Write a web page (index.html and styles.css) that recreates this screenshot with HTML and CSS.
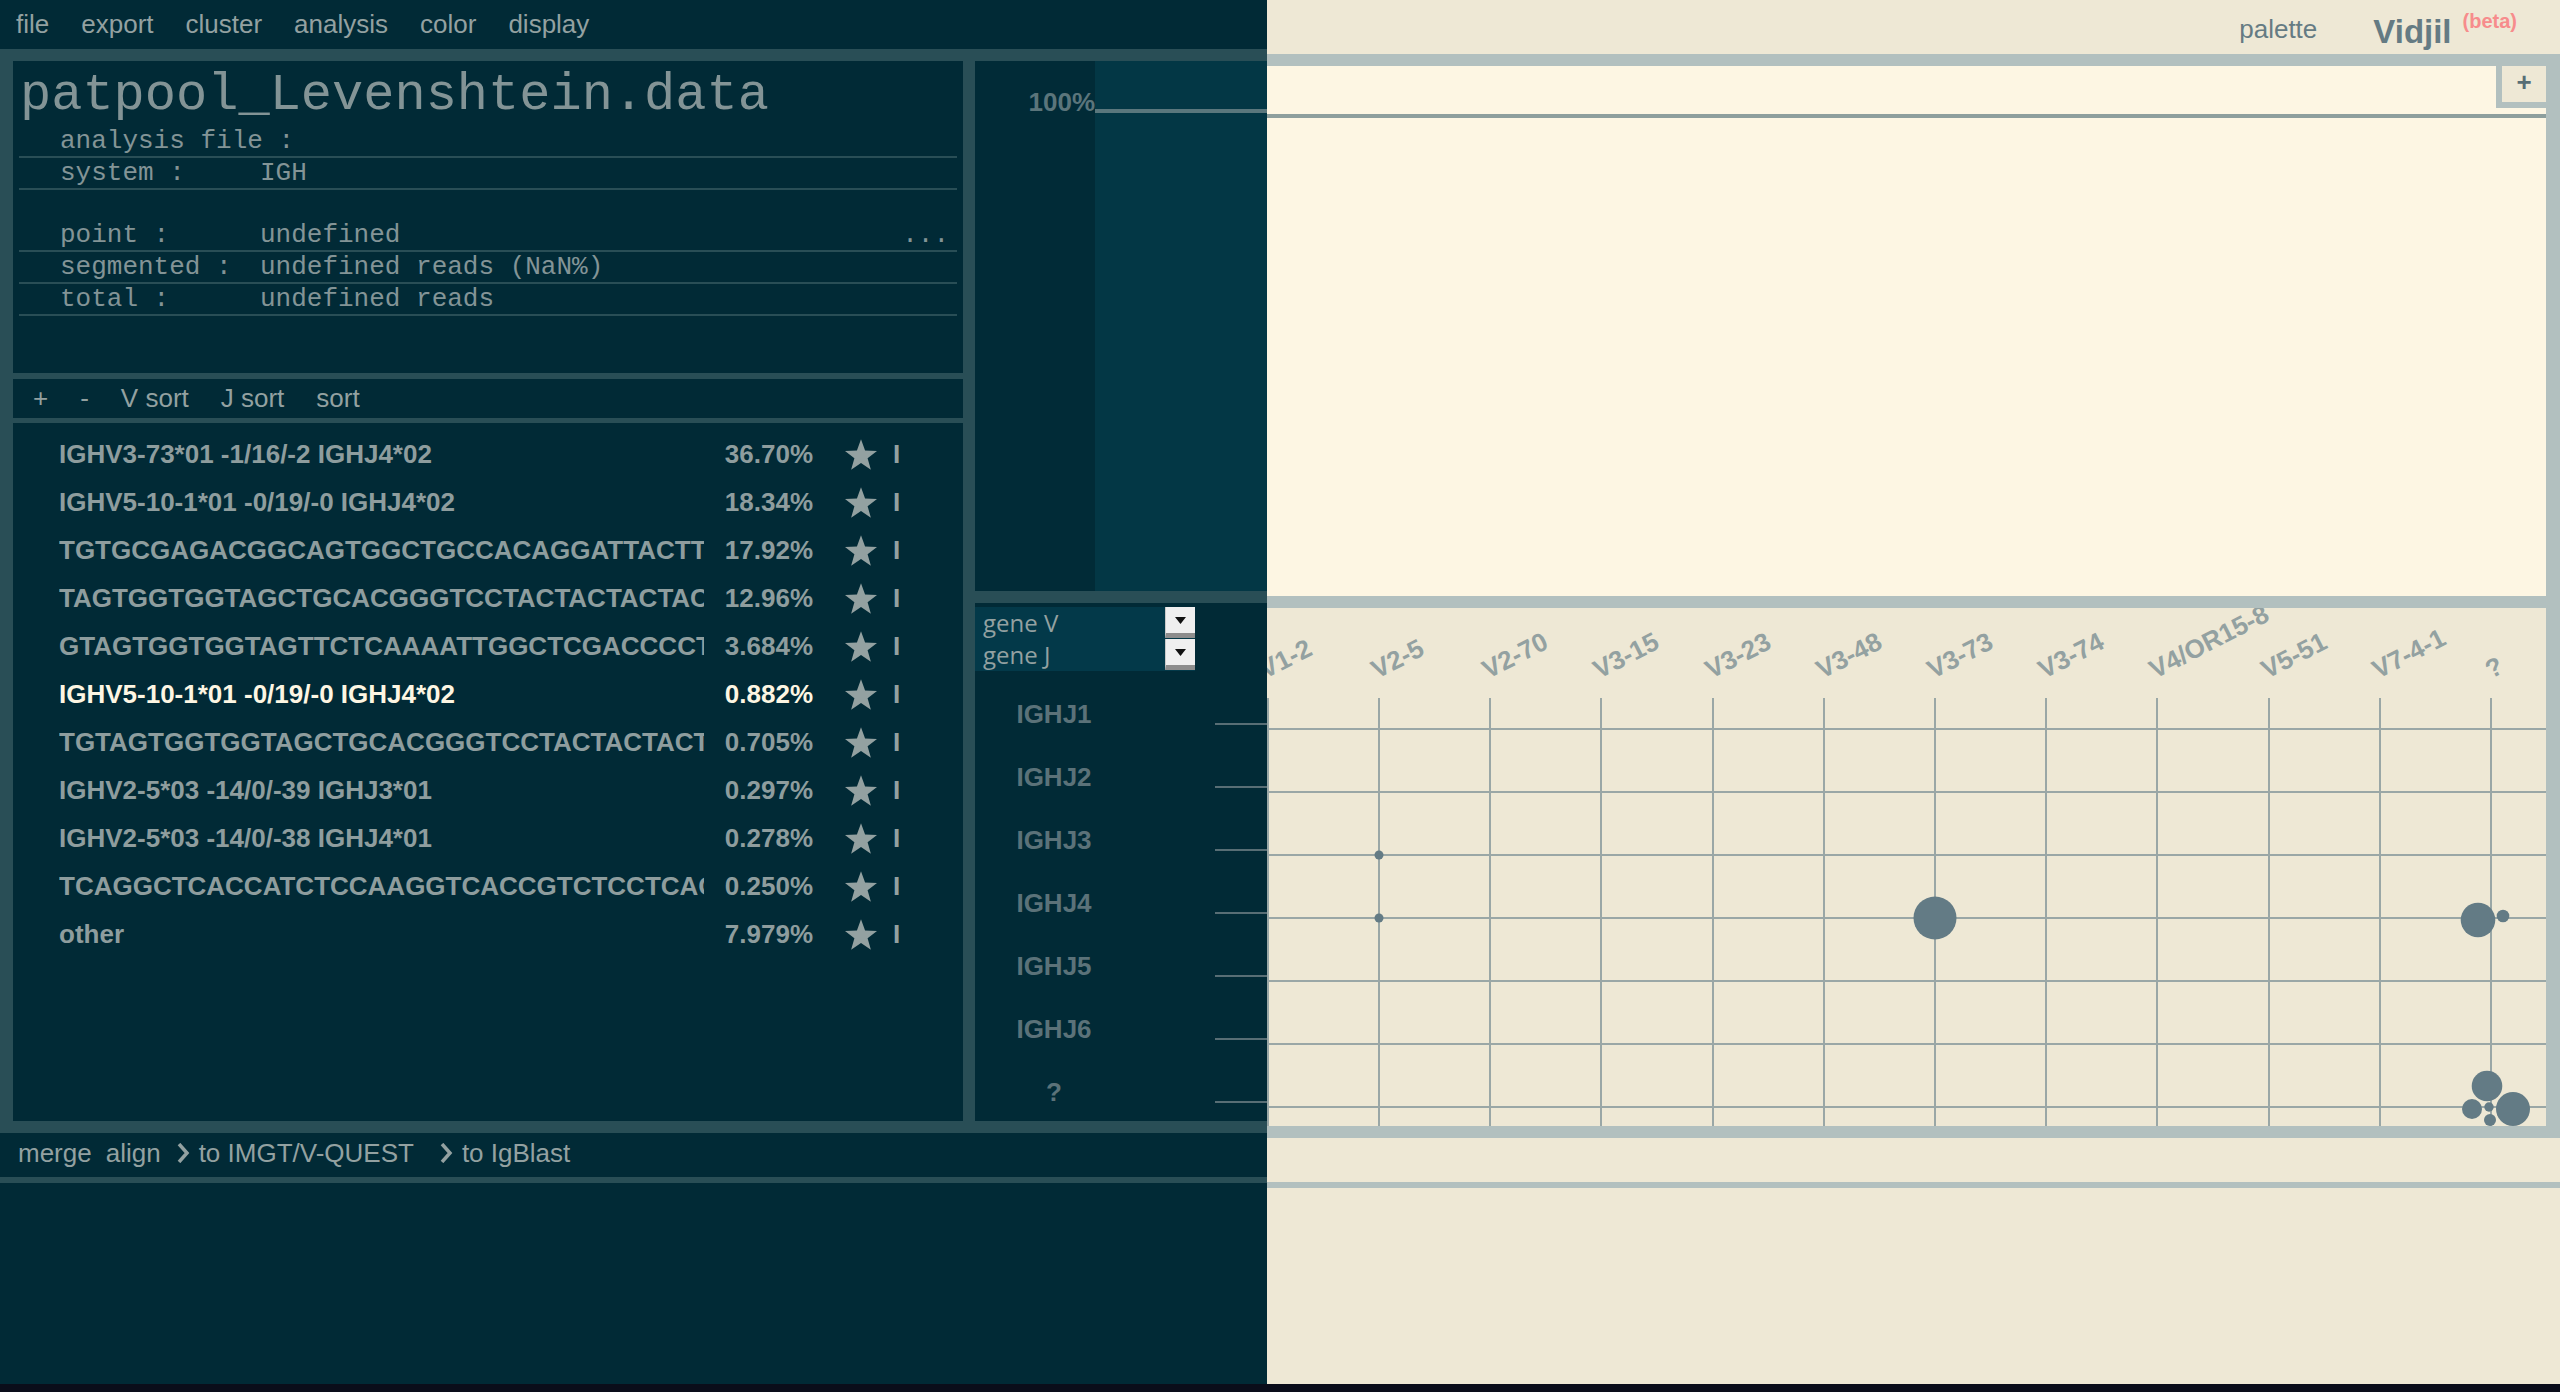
FILE: index.html
```html
<!DOCTYPE html>
<html lang="en">
<head>
<meta charset="utf-8">
<title>Vidjil</title>
<link rel="stylesheet" href="styles.css">
</head>
<body>
<div class="app">
  <div class="left">
    <nav class="menu">
      <span class="menu-item">file</span>
      <span class="menu-item">export</span>
      <span class="menu-item">cluster</span>
      <span class="menu-item">analysis</span>
      <span class="menu-item">color</span>
      <span class="menu-item">display</span>
    </nav>
    <div class="workspace">
      <div class="list-col">
        <section class="info">
          <h1 class="info-title">patpool_Levenshtein.data</h1>
          <div class="info-row"><span class="info-label">analysis file :</span><span class="info-value"></span></div>
          <div class="info-row"><span class="info-label">system :</span><span class="info-value">IGH</span></div>
          <div class="info-spacer"></div>
          <div class="info-row"><span class="info-label">point :</span><span class="info-value">undefined</span><span class="info-more">...</span></div>
          <div class="info-row"><span class="info-label">segmented :</span><span class="info-value">undefined reads (NaN%)</span></div>
          <div class="info-row"><span class="info-label">total :</span><span class="info-value">undefined reads</span></div>
        </section>
        <div class="sortbar">
          <span class="sort-item">+</span>
          <span class="sort-item">-</span>
          <span class="sort-item">V sort</span>
          <span class="sort-item">J sort</span>
          <span class="sort-item">sort</span>
        </div>
        <section class="list">
          <div class="clone"><span class="clone-name">IGHV3-73*01 -1/16/-2 IGHJ4*02</span><span class="clone-pct">36.70%</span><svg class="clone-star" viewBox="0 0 32.34 30.75"><polygon points="16.17,0 20.28,11.34 32.34,11.75 22.83,19.16 26.16,30.75 16.17,24 6.18,30.75 9.51,19.16 0,11.75 12.06,11.34"/></svg><span class="clone-bar">I</span></div>
          <div class="clone"><span class="clone-name">IGHV5-10-1*01 -0/19/-0 IGHJ4*02</span><span class="clone-pct">18.34%</span><svg class="clone-star" viewBox="0 0 32.34 30.75"><polygon points="16.17,0 20.28,11.34 32.34,11.75 22.83,19.16 26.16,30.75 16.17,24 6.18,30.75 9.51,19.16 0,11.75 12.06,11.34"/></svg><span class="clone-bar">I</span></div>
          <div class="clone"><span class="clone-name">TGTGCGAGACGGCAGTGGCTGCCACAGGATTACTTT</span><span class="clone-pct">17.92%</span><svg class="clone-star" viewBox="0 0 32.34 30.75"><polygon points="16.17,0 20.28,11.34 32.34,11.75 22.83,19.16 26.16,30.75 16.17,24 6.18,30.75 9.51,19.16 0,11.75 12.06,11.34"/></svg><span class="clone-bar">I</span></div>
          <div class="clone"><span class="clone-name">TAGTGGTGGTAGCTGCACGGGTCCTACTACTACTACG</span><span class="clone-pct">12.96%</span><svg class="clone-star" viewBox="0 0 32.34 30.75"><polygon points="16.17,0 20.28,11.34 32.34,11.75 22.83,19.16 26.16,30.75 16.17,24 6.18,30.75 9.51,19.16 0,11.75 12.06,11.34"/></svg><span class="clone-bar">I</span></div>
          <div class="clone"><span class="clone-name">GTAGTGGTGGTAGTTCTCAAAATTGGCTCGACCCCTG</span><span class="clone-pct">3.684%</span><svg class="clone-star" viewBox="0 0 32.34 30.75"><polygon points="16.17,0 20.28,11.34 32.34,11.75 22.83,19.16 26.16,30.75 16.17,24 6.18,30.75 9.51,19.16 0,11.75 12.06,11.34"/></svg><span class="clone-bar">I</span></div>
          <div class="clone is-selected"><span class="clone-name">IGHV5-10-1*01 -0/19/-0 IGHJ4*02</span><span class="clone-pct">0.882%</span><svg class="clone-star" viewBox="0 0 32.34 30.75"><polygon points="16.17,0 20.28,11.34 32.34,11.75 22.83,19.16 26.16,30.75 16.17,24 6.18,30.75 9.51,19.16 0,11.75 12.06,11.34"/></svg><span class="clone-bar">I</span></div>
          <div class="clone"><span class="clone-name">TGTAGTGGTGGTAGCTGCACGGGTCCTACTACTACTA</span><span class="clone-pct">0.705%</span><svg class="clone-star" viewBox="0 0 32.34 30.75"><polygon points="16.17,0 20.28,11.34 32.34,11.75 22.83,19.16 26.16,30.75 16.17,24 6.18,30.75 9.51,19.16 0,11.75 12.06,11.34"/></svg><span class="clone-bar">I</span></div>
          <div class="clone"><span class="clone-name">IGHV2-5*03 -14/0/-39 IGHJ3*01</span><span class="clone-pct">0.297%</span><svg class="clone-star" viewBox="0 0 32.34 30.75"><polygon points="16.17,0 20.28,11.34 32.34,11.75 22.83,19.16 26.16,30.75 16.17,24 6.18,30.75 9.51,19.16 0,11.75 12.06,11.34"/></svg><span class="clone-bar">I</span></div>
          <div class="clone"><span class="clone-name">IGHV2-5*03 -14/0/-38 IGHJ4*01</span><span class="clone-pct">0.278%</span><svg class="clone-star" viewBox="0 0 32.34 30.75"><polygon points="16.17,0 20.28,11.34 32.34,11.75 22.83,19.16 26.16,30.75 16.17,24 6.18,30.75 9.51,19.16 0,11.75 12.06,11.34"/></svg><span class="clone-bar">I</span></div>
          <div class="clone"><span class="clone-name">TCAGGCTCACCATCTCCAAGGTCACCGTCTCCTCAG</span><span class="clone-pct">0.250%</span><svg class="clone-star" viewBox="0 0 32.34 30.75"><polygon points="16.17,0 20.28,11.34 32.34,11.75 22.83,19.16 26.16,30.75 16.17,24 6.18,30.75 9.51,19.16 0,11.75 12.06,11.34"/></svg><span class="clone-bar">I</span></div>
          <div class="clone"><span class="clone-name">other</span><span class="clone-pct">7.979%</span><svg class="clone-star" viewBox="0 0 32.34 30.75"><polygon points="16.17,0 20.28,11.34 32.34,11.75 22.83,19.16 26.16,30.75 16.17,24 6.18,30.75 9.51,19.16 0,11.75 12.06,11.34"/></svg><span class="clone-bar">I</span></div>
        </section>
      </div>
      <div class="graph-col">
        <div class="graph-top">
          <div class="gt-axis"><span class="gt-label">100%</span></div>
          <div class="gt-plot"><div class="gt-line"></div></div>
        </div>
        <div class="graph-bottom">
          <div class="axis-select">
            <div class="axis-opt"><span class="axis-opt-text">gene V</span><span class="axis-arrow"><svg class="axis-tri" viewBox="0 0 11 7"><polygon points="0,0 11,0 5.5,7"/></svg></span></div>
            <div class="axis-opt"><span class="axis-opt-text">gene J</span><span class="axis-arrow"><svg class="axis-tri" viewBox="0 0 11 7"><polygon points="0,0 11,0 5.5,7"/></svg></span></div>
          </div>
          <svg class="jaxis" viewBox="0 0 292 518">
            <g class="jticks">
              <line x1="240" y1="121" x2="292" y2="121"/>
              <line x1="240" y1="184" x2="292" y2="184"/>
              <line x1="240" y1="247" x2="292" y2="247"/>
              <line x1="240" y1="310" x2="292" y2="310"/>
              <line x1="240" y1="373" x2="292" y2="373"/>
              <line x1="240" y1="436" x2="292" y2="436"/>
              <line x1="240" y1="499" x2="292" y2="499"/>
            </g>
            <text class="jlabel" x="79" y="120">IGHJ1</text>
            <text class="jlabel" x="79" y="183">IGHJ2</text>
            <text class="jlabel" x="79" y="246">IGHJ3</text>
            <text class="jlabel" x="79" y="309">IGHJ4</text>
            <text class="jlabel" x="79" y="372">IGHJ5</text>
            <text class="jlabel" x="79" y="435">IGHJ6</text>
            <text class="jlabel" x="79" y="498">?</text>
          </svg>
        </div>
      </div>
    </div>
    <div class="toolbar">
      <span class="tb-item">merge</span>
      <span class="tb-item">align</span>
      <span class="tb-item"><svg class="tb-chev" viewBox="0 0 16 20"><polyline points="4,1 12,10 4,19"/></svg>to IMGT/V-QUEST</span>
      <span class="tb-item tb-last"><svg class="tb-chev" viewBox="0 0 16 20"><polyline points="4,1 12,10 4,19"/></svg>to IgBlast</span>
    </div>
    <div class="left-rest"></div>
  </div>

  <div class="right">
    <header class="top-right">
      <span class="palette">palette</span>
      <span class="logo">Vidjil</span>
      <span class="beta">(beta)</span>
    </header>
    <div class="graphs">
      <section class="timeline">
        <div class="tl-line"></div>
        <div class="tl-plus">+</div>
      </section>
      <section class="grid">
        <svg class="grid-svg" viewBox="0 0 1279 518">
          <g class="vlines">
            <line x1="1" y1="90" x2="1" y2="518"/>
            <line x1="112" y1="90" x2="112" y2="518"/>
            <line x1="223" y1="90" x2="223" y2="518"/>
            <line x1="334" y1="90" x2="334" y2="518"/>
            <line x1="446" y1="90" x2="446" y2="518"/>
            <line x1="557" y1="90" x2="557" y2="518"/>
            <line x1="668" y1="90" x2="668" y2="518"/>
            <line x1="779" y1="90" x2="779" y2="518"/>
            <line x1="890" y1="90" x2="890" y2="518"/>
            <line x1="1002" y1="90" x2="1002" y2="518"/>
            <line x1="1113" y1="90" x2="1113" y2="518"/>
            <line x1="1224" y1="90" x2="1224" y2="518"/>
          </g>
          <g class="hlines">
            <line x1="0" y1="121" x2="1279" y2="121"/>
            <line x1="0" y1="184" x2="1279" y2="184"/>
            <line x1="0" y1="247" x2="1279" y2="247"/>
            <line x1="0" y1="310" x2="1279" y2="310"/>
            <line x1="0" y1="373" x2="1279" y2="373"/>
            <line x1="0" y1="436" x2="1279" y2="436"/>
            <line x1="0" y1="499" x2="1279" y2="499"/>
          </g>
          <text class="vlabel" x="-2" y="71" transform="rotate(-27 -2 71)">V1-2</text>
          <text class="vlabel" x="110" y="71" transform="rotate(-27 110 71)">V2-5</text>
          <text class="vlabel" x="221" y="71" transform="rotate(-27 221 71)">V2-70</text>
          <text class="vlabel" x="332" y="71" transform="rotate(-27 332 71)">V3-15</text>
          <text class="vlabel" x="444" y="71" transform="rotate(-27 444 71)">V3-23</text>
          <text class="vlabel" x="555" y="71" transform="rotate(-27 555 71)">V3-48</text>
          <text class="vlabel" x="666" y="71" transform="rotate(-27 666 71)">V3-73</text>
          <text class="vlabel" x="777" y="71" transform="rotate(-27 777 71)">V3-74</text>
          <text class="vlabel" x="888" y="71" transform="rotate(-27 888 71)">V4/OR15-8</text>
          <text class="vlabel" x="1000" y="71" transform="rotate(-27 1000 71)">V5-51</text>
          <text class="vlabel" x="1111" y="71" transform="rotate(-27 1111 71)">V7-4-1</text>
          <text class="vlabel" x="1224" y="71" transform="rotate(-27 1224 71)">?</text>
          <g class="bubbles">
            <circle cx="112" cy="247" r="4.5"/>
            <circle cx="112" cy="310" r="4.5"/>
            <circle cx="668" cy="310" r="21.5"/>
            <circle cx="1211" cy="312" r="17.3"/>
            <circle cx="1236" cy="308" r="6.3"/>
            <circle cx="1220" cy="478" r="15.3"/>
            <circle cx="1205" cy="501" r="10"/>
            <circle cx="1222" cy="499" r="4.7"/>
            <circle cx="1223" cy="512" r="6"/>
            <circle cx="1246" cy="501" r="17"/>
          </g>
        </svg>
      </section>
    </div>
    <div class="right-bar"></div>
    <div class="right-rest"></div>
  </div>
</div>
<div class="strip"></div>
</body>
</html>
```

FILE: styles.css
```css
* { box-sizing: border-box; }
html, body { margin: 0; padding: 0; }
body {
  width: 2560px;
  height: 1392px;
  overflow: hidden;
  background: #0a0d1a;
  font-family: "Liberation Sans", Arial, sans-serif;
}
.app { display: flex; height: 1384px; }

/* ---------- left dark side ---------- */
.left {
  width: 1267px;
  flex: none;
  display: flex;
  flex-direction: column;
  background: #012a36;
}
.menu {
  height: 49px;
  flex: none;
  display: flex;
  font-size: 26px;
  line-height: 49px;
  color: #93a1a1;
}
.menu-item { padding: 0 16px; }

.workspace {
  height: 1084px;
  flex: none;
  background: #294e56;
  padding: 12px 0 12px 13px;
  display: flex;
  gap: 12px;
}
.list-col { width: 950px; display: flex; flex-direction: column; }

.info {
  height: 312px;
  flex: none;
  background: #012a36;
  padding: 5px 6px 0;
  color: #839496;
  font-family: "Liberation Mono", "Courier New", monospace;
}
.info-title {
  margin: 0;
  padding-left: 1px;
  font-weight: normal;
  font-size: 52px;
  line-height: 60px;
  white-space: nowrap;
}
.info-row {
  display: flex;
  height: 32px;
  border-bottom: 2px solid #294e56;
  font-size: 26px;
  line-height: 30px;
  padding: 0 8px 0 41px;
  white-space: pre;
}
.info-label { width: 200px; flex: none; }
.info-value { flex: 1; }
.info-more { flex: none; }
.info-spacer { height: 30px; }

.sortbar {
  margin-top: 6px;
  height: 39px;
  flex: none;
  background: #012a36;
  padding-left: 4px;
  display: flex;
  font-size: 26px;
  line-height: 39px;
  color: #93a1a1;
}
.sort-item { padding: 0 16px; }

.list {
  margin-top: 5px;
  flex: 1;
  background: #012a36;
  padding: 7px 0 0 46px;
}
.clone {
  display: flex;
  align-items: center;
  height: 48px;
  font-weight: bold;
  font-size: 26px;
  line-height: 48px;
  color: #8e9d9e;
}
.clone-name { width: 645px; flex: none; overflow: hidden; white-space: nowrap; }
.clone-pct { width: 109px; flex: none; text-align: right; }
.clone-star { width: 32px; height: 31px; margin-left: 32px; flex: none; fill: #93a1a1; }
.clone-bar { margin-left: 16px; color: #93a1a1; }
.clone.is-selected .clone-name,
.clone.is-selected .clone-pct { color: #fdf6e3; }

/* graph column on the dark side */
.graph-col { width: 292px; display: flex; flex-direction: column; }
.graph-top { height: 530px; flex: none; display: flex; }
.gt-axis {
  width: 120px;
  flex: none;
  background: #012b37;
  text-align: right;
  padding-top: 26px;
}
.gt-label {
  font-weight: bold;
  font-size: 26px;
  line-height: 30px;
  color: #5b757b;
}
.gt-plot { flex: 1; background: #033745; }
.gt-line { margin-top: 48px; height: 4px; background: #5a777d; }

.graph-bottom {
  margin-top: 12px;
  flex: 1;
  background: #012a36;
  position: relative;
}
.axis-select {
  margin-top: 4px;
  width: 220px;
  background: #033949;
  position: relative;
  z-index: 1;
}
.axis-opt {
  display: flex;
  justify-content: space-between;
  height: 32px;
  font-family: "Open Sans", "Liberation Sans", sans-serif;
  font-size: 24px;
  line-height: 32px;
  color: #93a1a1;
}
.axis-opt-text { padding-left: 8px; }
.axis-arrow {
  width: 30px;
  height: 31px;
  background: #efefef;
  border-bottom: 5px solid #8d8d8d;
  border-left: 1px solid #c9c9c9;
  display: flex;
  align-items: center;
  justify-content: center;
}
.axis-tri { width: 11px; height: 7px; fill: #111; }
.jaxis {
  position: absolute;
  left: 0;
  top: 0;
  width: 292px;
  height: 518px;
}
.jticks line { stroke: #586e75; stroke-width: 2; }
.jlabel {
  font-family: "Liberation Sans", Arial, sans-serif;
  font-weight: bold;
  font-size: 26px;
  fill: #5b7279;
  text-anchor: middle;
}

.toolbar {
  height: 50px;
  flex: none;
  border-bottom: 6px solid #294e56;
  padding-left: 11px;
  display: flex;
  align-items: flex-start;
  font-size: 26px;
  line-height: 40px;
  color: #93a1a1;
}
.tb-item { padding: 0 7px; display: flex; align-items: center; }
.tb-last { margin-left: 10px; }
.tb-chev {
  width: 16px;
  height: 20px;
  margin-right: 8px;
  fill: none;
  stroke: #93a1a1;
  stroke-width: 3.5;
}
.left-rest { flex: 1; background: #012a36; }

/* ---------- right light side ---------- */
.right {
  flex: 1;
  display: flex;
  flex-direction: column;
  background: #eee8d5;
}
.top-right {
  height: 54px;
  flex: none;
  display: flex;
  justify-content: flex-end;
  align-items: flex-start;
  padding-right: 43px;
  color: #657b83;
}
.palette {
  margin-top: 14px;
  margin-right: 56px;
  font-size: 26px;
  line-height: 30px;
}
.logo {
  margin-top: 13px;
  margin-right: 11px;
  font-weight: bold;
  font-size: 33px;
  line-height: 38px;
}
.beta {
  margin-top: 9px;
  font-weight: bold;
  font-size: 20px;
  line-height: 24px;
  color: #f78c8c;
}
.graphs {
  height: 1084px;
  flex: none;
  background: #b2c0bf;
  padding: 12px 14px 12px 0;
  display: flex;
  flex-direction: column;
  gap: 12px;
}
.timeline {
  height: 530px;
  flex: none;
  background: #fdf6e3;
  position: relative;
}
.tl-line { margin-top: 48px; height: 4px; background: #8e9f9d; }
.tl-plus {
  position: absolute;
  top: 0;
  right: 0;
  width: 50px;
  height: 42px;
  border-left: 6px solid #b2c0bf;
  border-bottom: 6px solid #b2c0bf;
  background: #eee8d5;
  color: #586e75;
  font-weight: bold;
  font-size: 26px;
  line-height: 32px;
  text-align: center;
}
.grid {
  height: 518px;
  flex: none;
  background: #eee8d5;
  overflow: hidden;
}
.grid-svg { display: block; width: 1279px; height: 518px; overflow: hidden; }
.vlines line { stroke: #9aa7a6; stroke-width: 2; }
.hlines line { stroke: #9aa7a6; stroke-width: 2; }
.vlabel {
  font-family: "Liberation Sans", Arial, sans-serif;
  font-weight: bold;
  font-size: 26px;
  fill: #93a1a1;
}
.bubbles circle { fill: #637b85; }

.right-bar {
  height: 50px;
  flex: none;
  border-bottom: 6px solid #b2c0bf;
}
.right-rest { flex: 1; }

.strip { height: 8px; background: #0a0d1a; }
```
